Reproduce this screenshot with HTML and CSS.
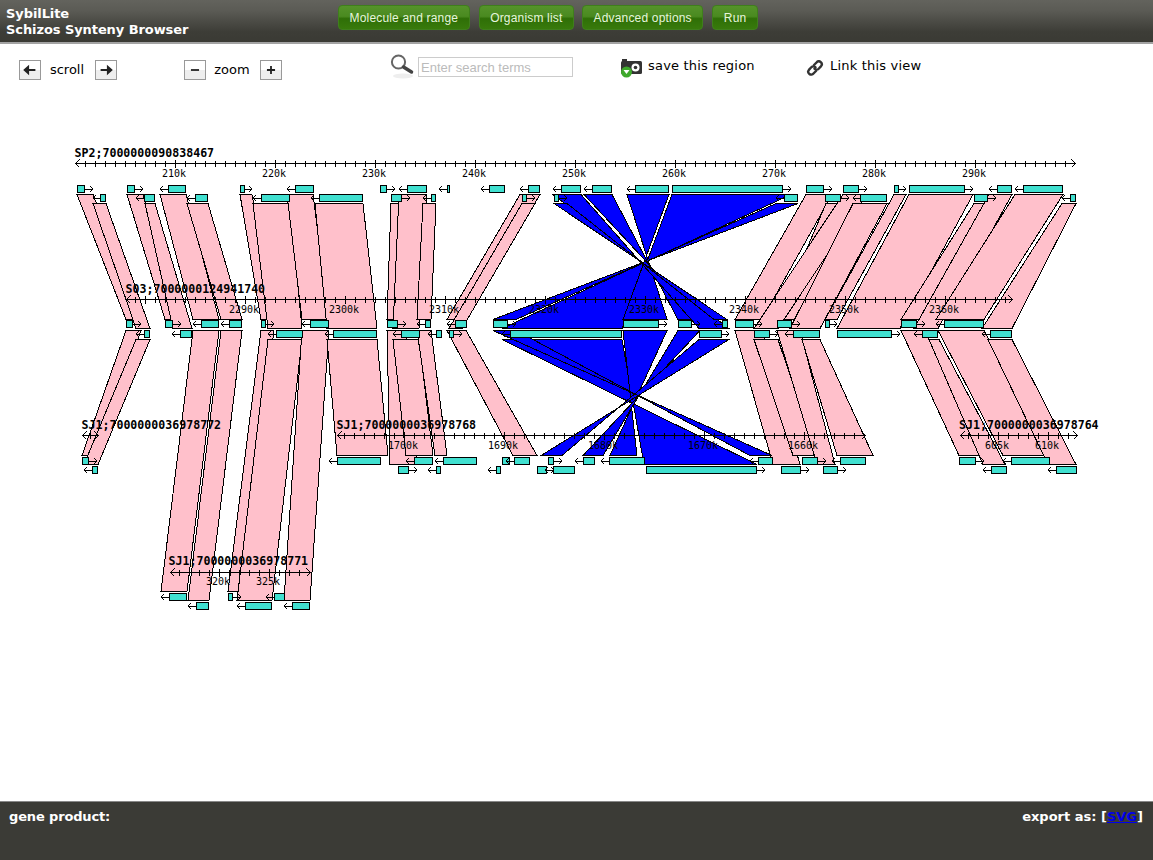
FILE: index.html
```html
<!DOCTYPE html>
<html lang="en">
<head>
<meta charset="utf-8">
<title>SybilLite Schizos Synteny Browser</title>
<link rel="stylesheet" href="styles.css">
</head>
<body>
<header class="topbar">
  <div class="brand">SybilLite<br>Schizos Synteny Browser</div>
  <nav class="menu">
    <a class="menu-btn">Molecule and range</a>
    <a class="menu-btn">Organism list</a>
    <a class="menu-btn">Advanced options</a>
    <a class="menu-btn">Run</a>
  </nav>
</header>
<section class="tools">
  <div class="group">
    <button class="nudge"><svg viewBox="0 0 22 20" class="glyph"><path d="M5 10h12M5 10l4-3.5v7z"/></svg></button>
    <span class="tool-label">scroll</span>
    <button class="nudge"><svg viewBox="0 0 22 20" class="glyph"><path d="M5 10h12M17 10l-4-3.5v7z"/></svg></button>
  </div>
  <div class="group">
    <button class="nudge"><svg viewBox="0 0 22 20" class="glyph"><path d="M6.5 10h9"/></svg></button>
    <span class="tool-label">zoom</span>
    <button class="nudge"><svg viewBox="0 0 22 20" class="glyph"><path d="M6.5 10h9M11 5.5v9"/></svg></button>
  </div>
  <div class="search">
    <svg class="icon-search" viewBox="0 0 24 26" width="24" height="26">
      <ellipse class="mag-shadow" cx="13" cy="22" rx="10" ry="2.5"/>
      <circle class="mag-lens" cx="8.5" cy="8" r="6.6"/>
      <path class="mag-handle" d="M13.5 13l8 5"/>
    </svg>
    <input class="search-box" type="text" placeholder="Enter search terms">
  </div>
  <a class="action action-save">
    <svg viewBox="0 0 22 19" width="22" height="19">
      <rect class="cam-nub" x="1" y="0" width="5" height="3"/>
      <rect class="cam-body" x="0" y="2" width="21" height="13" rx="1.5"/>
      <circle class="cam-ring" cx="14.5" cy="8.5" r="4"/>
      <circle class="cam-eye" cx="14.5" cy="8.5" r="1.8"/>
      <circle class="cam-dot" cx="5.5" cy="13" r="5.5"/>
      <path class="cam-arrow" d="M2.5 11h6l-3 4z"/>
    </svg>
    <span>save this region</span>
  </a>
  <a class="action action-link">
    <svg viewBox="0 0 18 16" width="18" height="16">
      <path class="chain" d="M8 5l2.5-2.5a2.9 2.9 0 0 1 4.6 3.6l-2.4 2.6a2.9 2.9 0 0 1-4.2 0"/>
      <path class="chain" d="M10 11l-2.5 2.5a2.9 2.9 0 0 1-4.6-3.6l2.4-2.6a2.9 2.9 0 0 1 4.2 0"/>
    </svg>
    <span>Link this view</span>
  </a>
</section>
<main class="stage">
  <svg id="synteny" class="synteny" viewBox="0 100 1153 700" width="1153" height="700"></svg>
</main>
<footer class="status">
  <span class="gene-product">gene product:</span>
  <span>export as: [<a class="export-link" href="#">SVG</a>]</span>
</footer>
<script src="main.js"></script>
</body>
</html>
```
FILE: styles.css
```css
* { box-sizing: border-box; }
html, body { margin: 0; height: 100%; }
body {
  display: flex;
  flex-direction: column;
  height: 860px;
  overflow: hidden;
  background: #fff;
  color: #000;
  font-family: "DejaVu Sans", sans-serif;
}
.topbar {
  height: 44px;
  flex: none;
  display: flex;
  background: linear-gradient(#63635d 0%, #5b5b55 25%, #3d3d37 75%, #3a3a34 100%);
  border-bottom: 2px solid #a3a3a3;
}
.brand {
  width: 338px;
  padding: 6px 0 0 6px;
  color: #fff;
  font-weight: bold;
  font-size: 13px;
  line-height: 16px;
  letter-spacing: -.08px;
}
.menu { display: flex; padding-top: 5px; }
.menu-btn {
  height: 25px;
  margin-right: 9px;
  padding: 0 10.5px;
  display: flex;
  align-items: center;
  border: 1px solid #3f7f1c;
  border-radius: 4px;
  color: #e6f5dc;
  font-family: "Liberation Sans", sans-serif;
  font-size: 12px;
  letter-spacing: .18px;
  background: linear-gradient(#55932a 0%, #4a8a20 45%, #2f6f07 55%, #387a0c 100%);
}
.menu-btn:nth-child(2) { margin-right: 8px; }
.tools {
  height: 56px;
  flex: none;
  padding-left: 19px;
  display: grid;
  grid-template-columns: 165px 206px 230px 184px auto;
  font-size: 13px;
}
.group { display: flex; align-items: flex-start; padding-top: 16px; }
.nudge {
  width: 22px;
  height: 20px;
  padding: 0;
  border: 1px solid #999;
  background: linear-gradient(#fff 50%, #eee 50%);
}
.glyph { display: block; width: 20px; height: 18px; }
.glyph path { fill: #222; stroke: #222; stroke-width: 2; }
.tool-label { width: 54px; text-align: center; line-height: 20px; padding-right: 2px; }
.search { display: flex; align-items: flex-start; padding-top: 11px; }
.icon-search { flex: none; margin-right: 4px; margin-top: -1px; }
.mag-shadow { fill: #eee; }
.mag-lens { fill: #fff; stroke: #666; stroke-width: 2; }
.mag-handle { stroke: #444; stroke-width: 3.5; stroke-linecap: round; fill: none; }
.search-box {
  width: 155px;
  height: 20px;
  margin-top: 2px;
  padding: 0 2px;
  border: 1px solid #ccc;
  font-family: "Liberation Sans", sans-serif;
  font-size: 13px;
}
.search-box::placeholder { color: #bbb; opacity: 1; }
.action {
  display: flex;
  align-items: flex-start;
  letter-spacing: .2px;
  line-height: 18px;
  padding-top: 13px;
}
.action svg { flex: none; }
.action-save svg { margin: 2px 5px 0 1px; }
.action-link svg { margin: 3px 6px 0 2px; }
.cam-nub { fill: #333; }
.cam-body { fill: #333; }
.cam-ring { fill: #fff; }
.cam-eye { fill: #333; }
.cam-dot { fill: #3fa92c; }
.cam-arrow { fill: #fff; }
.chain { fill: none; stroke: #333; stroke-width: 2.4; stroke-linecap: round; }
.stage { flex: 1; min-height: 0; overflow: hidden; }
.synteny { display: block; }
.synteny .pink { fill: #ffc0cb; stroke: #000; stroke-width: 1; shape-rendering: crispEdges; }
.synteny .blue { fill: #0000ff; stroke: #000; stroke-width: 1; shape-rendering: crispEdges; }
.synteny .gene { fill: #40e0d0; stroke: #000; stroke-width: 1; shape-rendering: crispEdges; }
.synteny .line { fill: none; stroke: #000; stroke-width: 1; shape-rendering: crispEdges; }
.synteny .name { font: bold 11.6px "DejaVu Sans Mono", monospace; fill: #000; }
.synteny .tick { font: 10px "DejaVu Sans Mono", monospace; fill: #000; text-anchor: middle; }
.status {
  height: 59px;
  flex: none;
  display: flex;
  justify-content: space-between;
  padding: 7px 10px 0 9px;
  border-top: 1px solid #888;
  background: #3b3b36;
  color: #fff;
  font-weight: bold;
  font-size: 13px;
  line-height: 15px;
}
.gene-product { letter-spacing: -.15px; }
.export-link { color: #0000ee; text-decoration: underline; }
```
FILE: main.js
```js
(function () {
  var NS = 'http://www.w3.org/2000/svg';
  var svg = document.getElementById('synteny');
  function el(tag, attrs, text) {
    var n = document.createElementNS(NS, tag);
    for (var k in attrs) n.setAttribute(k, attrs[k]);
    if (text) n.textContent = text;
    svg.appendChild(n);
  }
  function poly(cls, a, b, y1, c, d, y2) {
    el('polygon', { 'class': cls, points: [a, y1, b, y1, d, y2, c, y2].join(' ') });
  }

  // [top-left, top-right, top y, bottom-left, bottom-right, bottom y]
  var A = 194.5, B = 203.5, C = 319.5, D = 328.5;
  var E = 330.5, F = 339.5, G = 455.5, H = 464.5, I = 591.5, J = 600.5;
  var pink = [
    [77,93,A,126,141,C],[93,106,B,136,150,D],[127,143,A,165,181,C],[145,155,B,173,192,D],
    [160,186,A,193,219,C],[187,208,B,221,242,C],[240,252,A,261,274,C],[253,290,B,268,302,D],
    [287,313,A,302,329,C],[315,363,B,327,377,D],[391,410,B,387,406,C],[399,427,A,393,419,D],
    [423,436,B,417,431,C],[520,540,A,447,466,C],[522,535,B,449,462,D],
    [806,832,A,735,762,C],[826,849,B,777,800,C],[843,867,A,754,778,D],[853,887,B,790,820,D],
    [894,906,A,825,837,C],[909,973,A,837,900,D],[974,996,B,901,925,C],[989,1012,A,914,938,D],
    [1015,1063,A,936,984,C],[1062,1076,B,982,1012,D],
    [126,141,E,82,97,G],[136,150,F,84,98,H],[193,219,E,161,187,I],[221,242,E,188,209,J],
    [261,274,E,228,241,I],[268,302,F,237,272,J],[302,329,E,284,310,J],[327,377,F,337,388,G],
    [387,406,E,390,417,H],[393,419,F,406,433,G],[417,431,E,435,447,G],[447,466,E,513,537,G],
    [735,762,E,773,800,H],[754,778,F,793,817,G],[777,800,E,817,835,H],[802,820,F,837,873,G],
    [901,925,E,959,984,G],[929,939,F,983,1005,H],[938,984,E,1003,1050,G],[988,1012,F,1048,1076,H]
  ];
  // inverted links: the polygon's sides cross, forming a bow tie
  var blue = [
    [672,791,A,502,622,D],[776,798,B,493,516,C],[627,669,A,623,667,C],[584,612,A,678,700,C],
    [553,581,A,699,729,D],[554,567,B,714,727,C],
    [502,622,F,644,757,H],[623,667,E,610,637,G],[678,700,E,583,603,G],[699,729,F,541,562,G],
    [493,516,E,750,772,G]
  ];
  pink.forEach(function (p) { poly('pink', p[0], p[1], p[2], p[3], p[4], p[5]); });
  blue.forEach(function (p) { poly('blue', p[0], p[1], p[2], p[4], p[3], p[5]); });

  function head(x, y, dir, size) {
    el('path', { 'class': 'line', d: 'M' + (x - dir * size) + ' ' + (y - size) + 'L' + x + ' ' + y + 'L' + (x - dir * size) + ' ' + (y + size) });
  }
  // [left, right, arrow tip]: the tip lies outside the box on the side it points to
  function genes(y, list) {
    list.forEach(function (g) {
      var mid = y + 3.5, dir = g[2] > g[1] ? 1 : -1, from = dir > 0 ? g[1] : g[0];
      el('path', { 'class': 'line', d: 'M' + from + ' ' + mid + 'H' + g[2] });
      head(g[2], mid, dir, 3);
      el('rect', { 'class': 'gene', x: g[0], y: y, width: g[1] - g[0], height: 7 });
    });
  }
  genes(185.5, [[77.5,84.5,93],[127.5,134.5,143],[168.5,185.5,160],[240.5,244.5,252],[295.5,313.5,287],
    [380.5,386.5,395],[407.5,426.5,399],[447.5,449.5,439],[489.5,504.5,481],[528.5,539.5,520],
    [561.5,580.5,553],[592.5,611.5,584],[635.5,668.5,627],[672.5,782.5,791],[806.5,823.5,832],
    [843.5,858.5,867],[894.5,898.5,906],[909.5,964.5,973],[997.5,1011.5,989],[1023.5,1062.5,1015]]);
  genes(194.5, [[100.5,105.5,93],[144.5,154.5,136],[195.5,207.5,187],[261.5,289.5,253],[319.5,362.5,311],
    [391.5,401.5,410],[431.5,435.5,423],[522.5,526.5,535],[554.5,558.5,567],[784.5,797.5,776],
    [825.5,840.5,849],[860.5,886.5,853],[974.5,987.5,996],[1070.5,1075.5,1062]]);
  genes(320.5, [[126.5,132.5,141],[165.5,172.5,181],[201.5,218.5,193],[229.5,241.5,221],[261.5,265.5,274],
    [310.5,328.5,302],[387.5,397.5,406],[425.5,430.5,417],[455.5,466.5,447],[493.5,507.5,516],
    [623.5,658.5,667],[678.5,691.5,700],[722.5,727.5,714],[735.5,753.5,762],[777.5,791.5,800],
    [825.5,829.5,837],[901.5,916.5,925],[944.5,983.5,936]]);
  genes(330.5, [[144.5,149.5,136],[180.5,191.5,172],[276.5,302.5,268],[333.5,376.5,325],[401.5,419.5,393],
    [436.5,441.5,428],[449.5,453.5,462],[510.5,621.5,502],[699.5,721.5,729],[754.5,769.5,778],
    [793.5,819.5,785],[837.5,891.5,900],[922.5,937.5,914],[990.5,1011.5,982]]);
  genes(457.5, [[82.5,88.5,97],[337.5,380.5,329],[414.5,432.5,406],[443.5,476.5,435],[502.5,509.5,518],
    [514.5,529.5,506],[548.5,553.5,562],[583.5,594.5,575],[609.5,644.5,601],[758.5,772.5,750],
    [802.5,817.5,826],[840.5,865.5,832],[959.5,975.5,984],[1011.5,1049.5,1003]]);
  genes(466.5, [[92.5,97.5,84],[398.5,408.5,417],[436.5,440.5,428],[496.5,500.5,488],[537.5,546.5,554],
    [553.5,574.5,545],[646.5,756.5,765],[781.5,800.5,809],[823.5,837.5,846],[991.5,1006.5,983],
    [1056.5,1076.5,1048]]);
  genes(593.5, [[169.5,186.5,161],[228.5,232.5,241],[274.5,284.5,266]]);
  genes(602.5, [[196.5,208.5,188],[245.5,271.5,237],[292.5,309.5,284]]);

  function axis(a) {
    el('path', { 'class': 'line', d: 'M' + a.from + ' ' + a.y + 'H' + a.to });
    head(a.from, a.y, -1, 4);
    head(a.to, a.y, 1, 4);
    for (var x = a.phase; x < a.to - 3; x += 10) {
      if (x <= a.from + 3) continue;
      var major = a.majors.indexOf(x) >= 0;
      el('path', { 'class': 'line', d: 'M' + x + ' ' + (a.y - (major ? 4 : 3)) + 'V' + (a.y + (major ? 4 : 3)) });
    }
    a.labels.forEach(function (l) { el('text', { 'class': 'tick', x: l[0] - 1, y: a.labelY }, l[1]); });
    el('text', { 'class': 'name', x: a.nameX, y: a.nameY }, a.name);
  }
  function series(start, first, step, n) {
    var out = [];
    for (var i = 0; i < n; i++) out.push([start + i * 100, (first + i * step) + 'k']);
    return out;
  }
  function xs(l) { return l.map(function (p) { return p[0]; }); }

  var l1 = series(175, 210, 10, 9);
  var l2 = series(245, 2290, 10, 8);
  var l3 = series(404, 1700, -10, 5);
  axis({ name: 'SP2;7000000090838467', nameX: 74.5, nameY: 157, from: 75.5, to: 1075.5, y: 163.5, phase: 85.5,
    majors: xs(l1).map(function (v) { return v + .5; }), labels: l1, labelY: 177 });
  axis({ name: 'S03;7000000124941740', nameX: 125.5, nameY: 293, from: 126.5, to: 1012.5, y: 299.5, phase: 135.5,
    majors: [145.5].concat(xs(l2).map(function (v) { return v + .5; })), labels: l2, labelY: 313 });
  axis({ name: 'SJ1;7000000036978772', nameX: 81.5, nameY: 429, from: 82.5, to: 98.5, y: 435.5, phase: 90.5,
    majors: [], labels: [], labelY: 449 });
  axis({ name: 'SJ1;7000000036978768', nameX: 336.5, nameY: 429, from: 337.5, to: 865.5, y: 435.5, phase: 344.5,
    majors: xs(l3).map(function (v) { return v + .5; }), labels: l3, labelY: 449 });
  axis({ name: 'SJ1;7000000036978764', nameX: 959, nameY: 429, from: 960.5, to: 1077.5, y: 435.5, phase: 968.5,
    majors: [998.5, 1048.5], labels: [[998, '605k'], [1048, '610k']], labelY: 449 });
  axis({ name: 'SJ1;7000000036978771', nameX: 168.5, nameY: 565, from: 170.5, to: 310.5, y: 572.5, phase: 179.5,
    majors: [219.5, 269.5], labels: [[219, '320k'], [269, '325k']], labelY: 585 });
})();
```
